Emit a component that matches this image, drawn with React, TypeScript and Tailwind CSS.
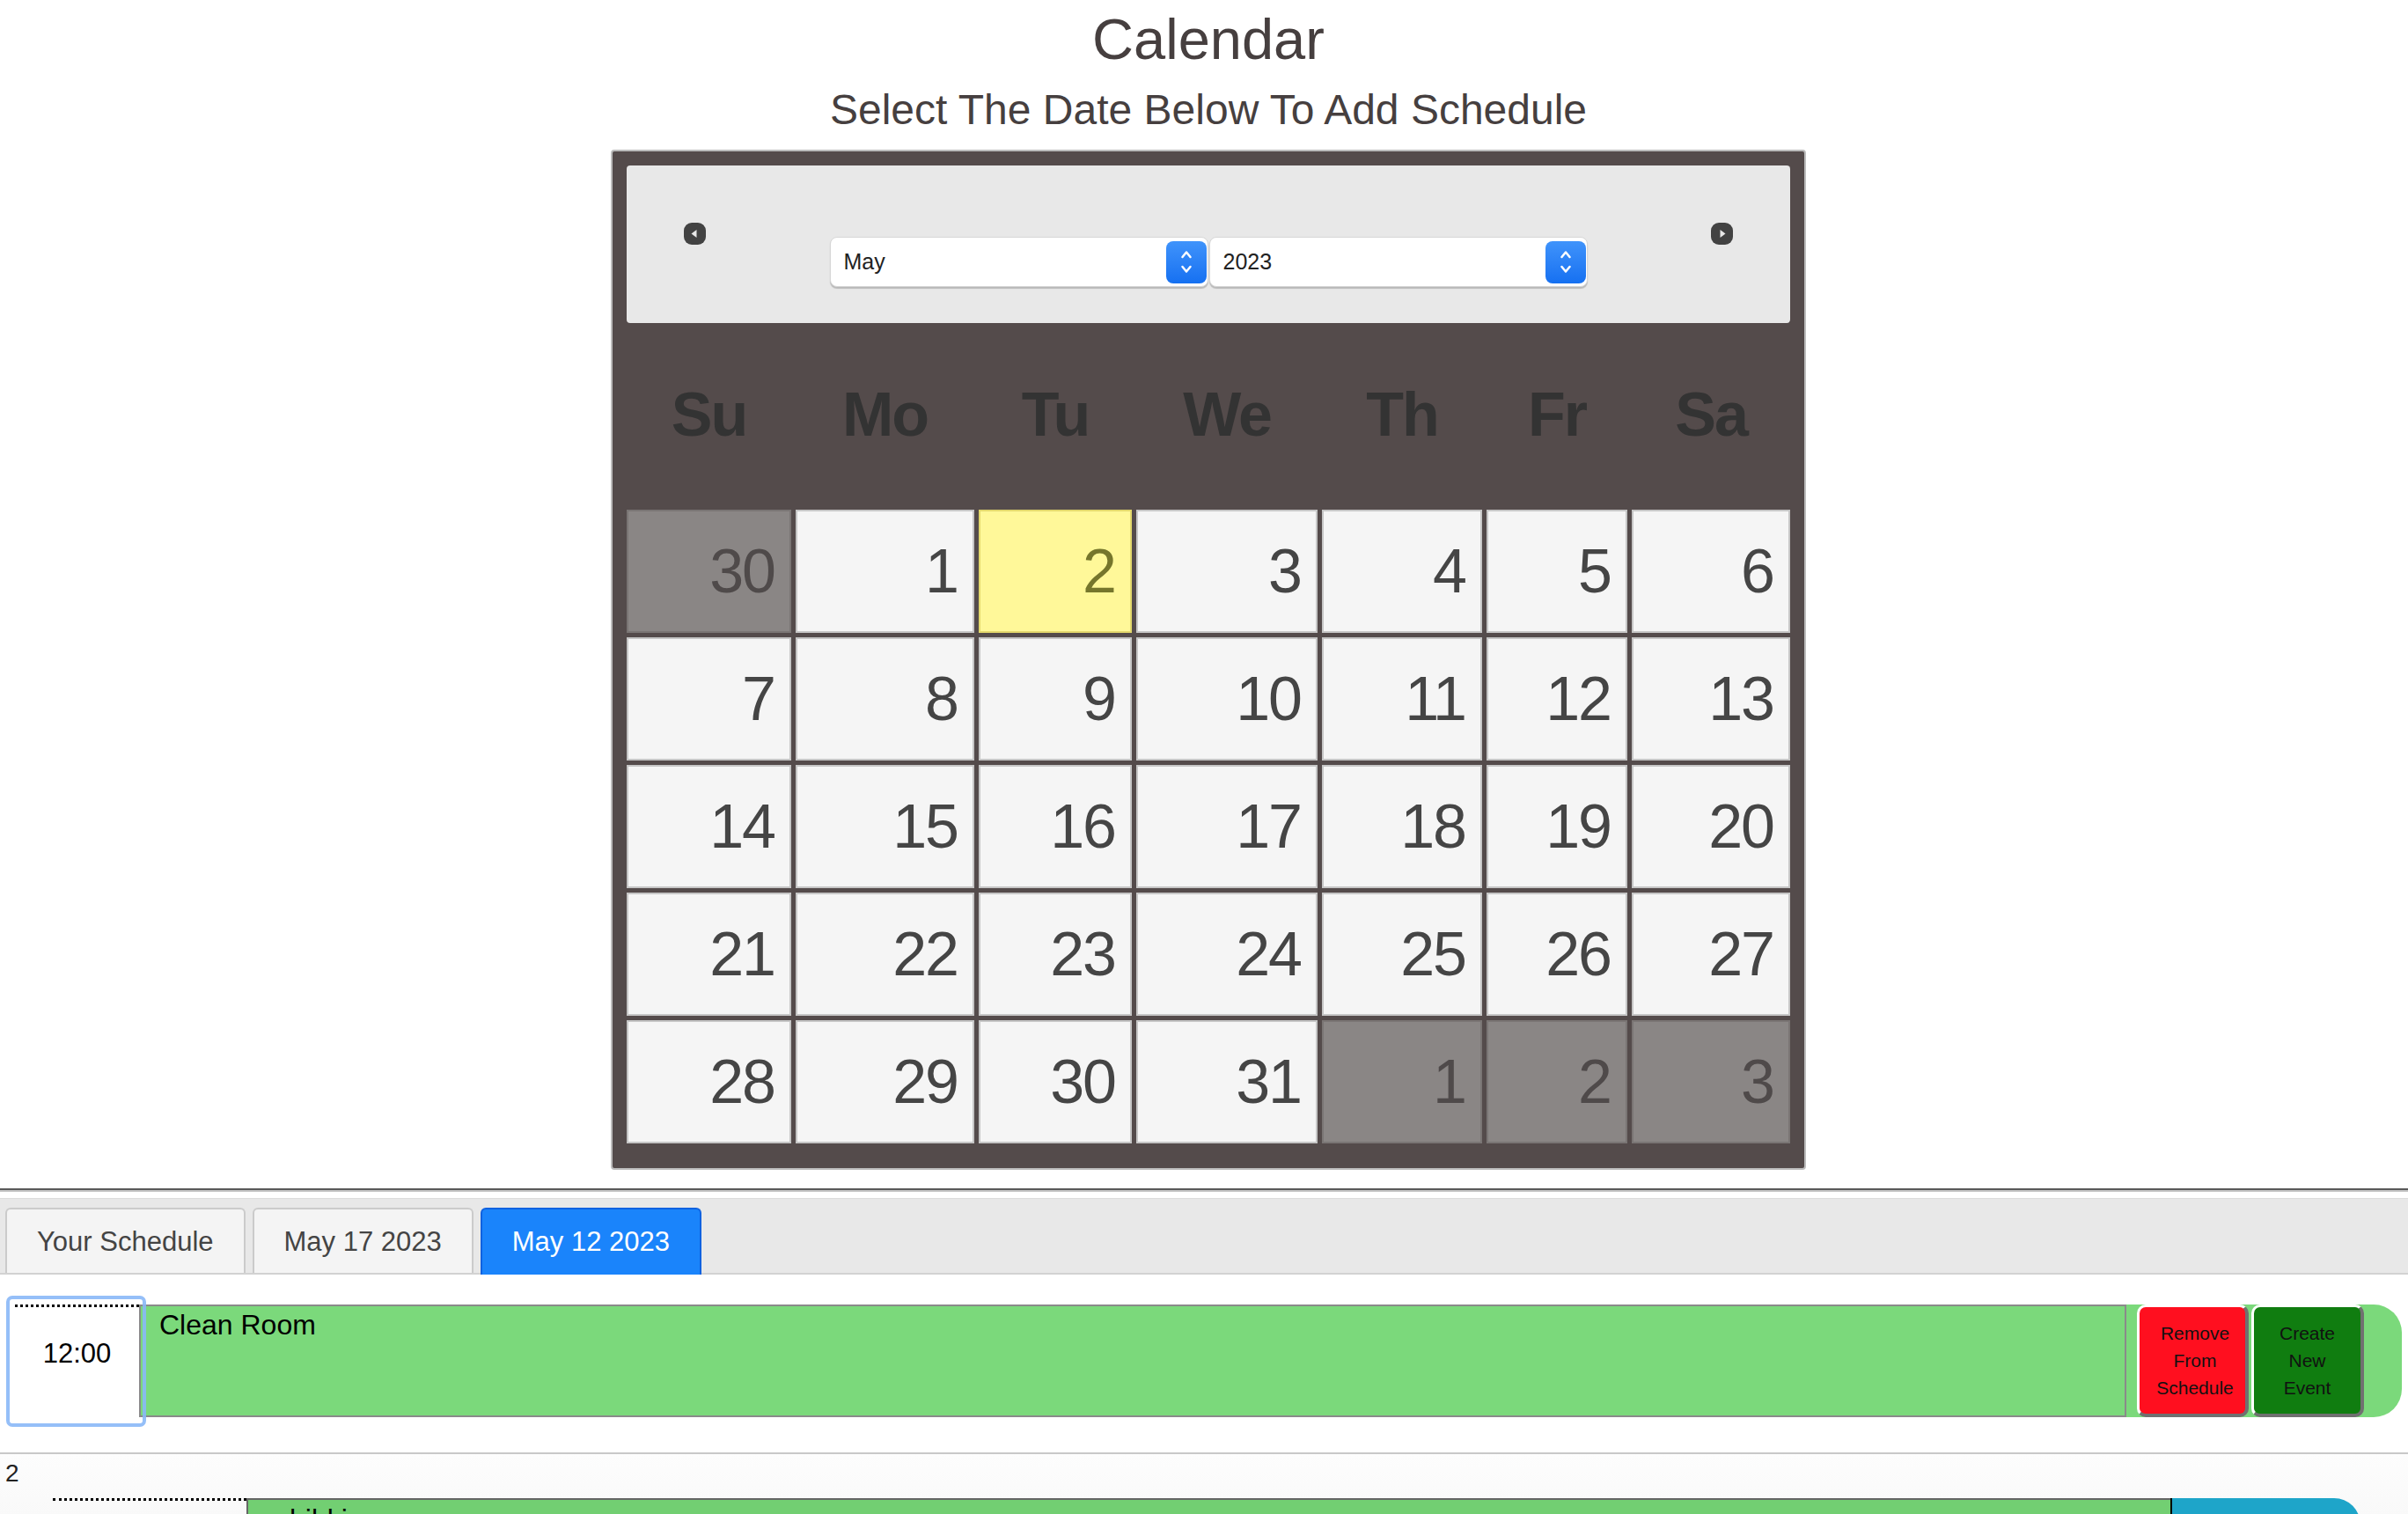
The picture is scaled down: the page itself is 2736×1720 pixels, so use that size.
import React from "react";

type Day = { n: number; other?: boolean; today?: boolean };

const weekDays = ["Su", "Mo", "Tu", "We", "Th", "Fr", "Sa"];

const weeks: Day[][] = [
  [{ n: 30, other: true }, { n: 1 }, { n: 2, today: true }, { n: 3 }, { n: 4 }, { n: 5 }, { n: 6 }],
  [{ n: 7 }, { n: 8 }, { n: 9 }, { n: 10 }, { n: 11 }, { n: 12 }, { n: 13 }],
  [{ n: 14 }, { n: 15 }, { n: 16 }, { n: 17 }, { n: 18 }, { n: 19 }, { n: 20 }],
  [{ n: 21 }, { n: 22 }, { n: 23 }, { n: 24 }, { n: 25 }, { n: 26 }, { n: 27 }],
  [{ n: 28 }, { n: 29 }, { n: 30 }, { n: 31 }, { n: 1, other: true }, { n: 2, other: true }, { n: 3, other: true }],
];

const cols = "grid grid-cols-[187px_203px_174px_206px_182px_160px_180px] gap-x-[5px]";

const NavArrow = ({ dir }: { dir: "left" | "right" }) => (
  <svg width="25" height="25" viewBox="0 0 25 25">
    <rect x="0" y="0" width="25" height="25" rx="9" fill="#424242" />
    {dir === "left" ? (
      <polygon points="8.5,12.5 14.5,8 14.5,17" fill="#e8e8e8" />
    ) : (
      <polygon points="16.5,12.5 10.5,8 10.5,17" fill="#e8e8e8" />
    )}
  </svg>
);

const SelectBox = ({ value }: { value: string }) => (
  <div className="w-[430px] h-[57px] bg-white rounded-[8px] border border-[#d6d6d6] shadow-[0_2px_1px_rgba(0,0,0,0.2)] flex items-center justify-between pl-[15px] pr-[1px]">
    <span className="text-[25px] leading-none text-[#222]">{value}</span>
    <div className="w-[46px] h-[48px] rounded-[8px] bg-gradient-to-b from-[#3f93fb] to-[#1570f1] flex items-center justify-center">
      <svg width="46" height="48" viewBox="0 0 46 48" fill="none" stroke="white" strokeWidth="2.5" strokeLinecap="round" strokeLinejoin="round">
        <polyline points="18.5,18 23,12.5 27.5,18" />
        <polyline points="18.5,29 23,34.5 27.5,29" />
      </svg>
    </div>
  </div>
);

const DayCell = ({ day }: { day: Day }) => {
  let tone = "bg-[#f5f5f5] border-[#c6c6c6] text-[#454545]";
  if (day.other) tone = "bg-[#8a8685] border-[#7a7574] text-[#4f4a4a]";
  if (day.today) tone = "bg-[#fff899] border-[#e3d86c] text-[#76762c]";
  return (
    <div className={`h-[140px] border-2 flex items-center justify-end pr-[17px] text-[70px] leading-none tracking-[-2px] ${tone}`}>
      {day.n}
    </div>
  );
};

const tabs = [
  { label: "Your Schedule", active: false },
  { label: "May 17 2023", active: false },
  { label: "May 12 2023", active: true },
];

export default function App() {
  return (
    <div className="min-h-screen bg-white font-['Liberation_Sans',Arial,sans-serif] overflow-hidden">
      <div className="pl-[10px]">
        <h1 className="mt-[12px] text-center text-[65px] leading-none text-[#463f3f]">Calendar</h1>
        <h2 className="mt-[24px] text-center text-[48px] leading-none text-[#463f3f]">
          Select The Date Below To Add Schedule
        </h2>

        <div className="mt-[21px] mx-auto w-[1358px] border-2 border-[#bcbcbc] rounded-[4px] bg-[#544b4b] px-[16px] pt-[16px] pb-[28px]">
          <div className="h-[179px] rounded-[4px] bg-[#e8e8e8] flex items-start justify-between px-[65px] pt-[65px]">
            <NavArrow dir="left" />
            <div className="mt-[16px] flex gap-[1px]">
              <SelectBox value="May" />
              <SelectBox value="2023" />
            </div>
            <NavArrow dir="right" />
          </div>

          <div className={`${cols} h-[207px] items-center`}>
            {weekDays.map((d) => (
              <div key={d} className="text-center text-[70px] font-bold leading-none tracking-[-2px] text-[#333]">
                {d}
              </div>
            ))}
          </div>

          <div className={`${cols} mt-[5px] gap-y-[5px]`}>
            {weeks.map((week, wi) => week.map((day, di) => <DayCell key={`${wi}-${di}`} day={day} />))}
          </div>
        </div>
      </div>

      <div className="mt-[21px] border-t-2 border-b-2 border-t-[#595959] border-b-[#c4c4c4]" />

      <div className="mt-[7px] h-[87px] bg-[#e8e8e8] border-t border-t-[#dcdcdc] border-b-2 border-b-[#d2d2d2] flex items-end gap-[8px] px-[6px]">
        {tabs.map((t) =>
          t.active ? (
            <div
              key={t.label}
              className="h-[76px] -mb-[2px] px-[34px] rounded-t-[6px] border-2 border-b-0 border-[#0f62e0] bg-[#1a84fb] text-white text-[31px] leading-none flex items-center pb-[2px]"
            >
              {t.label}
            </div>
          ) : (
            <div
              key={t.label}
              className="h-[74px] px-[34px] rounded-t-[6px] border-2 border-b-0 border-[#cbcbcb] bg-[#f4f4f4] text-[#444] text-[31px] leading-none flex items-center"
            >
              {t.label}
            </div>
          )
        )}
      </div>

      <div className="pt-[34px] pb-[40px] border-b-2 border-[#c8c8c8]">
        <div className="flex pl-[17px] pr-[7px]">
          <div className="relative w-[141px] h-[128px] bg-white border-t-[3px] border-dotted border-black flex justify-center pt-[37px] text-[31px] leading-none text-black">
            12:00
            <div className="absolute left-[-10px] top-[-13px] w-[159px] h-[149px] border-4 border-[#8ab8f7]/90 rounded-[7px] z-10 pointer-events-none" />
          </div>
          <div className="flex-1 h-[128px] flex bg-[#7bd97b] rounded-r-[32px] pr-[43px]">
            <div className="flex-1 border-2 border-[#8a8a8a] bg-[#7bd97b] pl-[21px] pt-[5px] text-[32px] leading-none text-black">
              Clean Room
            </div>
            <button className="ml-[12px] w-[127px] h-full rounded-[10px] border-t-[3px] border-l-[3px] border-r-[4px] border-b-[4px] border-t-white border-l-white border-r-[#707070] border-b-[#707070] bg-[#ff0f1f] text-[21px] leading-[31px] text-[#111] text-center flex items-center justify-center pl-[6px]">
              Remove From Schedule
            </button>
            <button className="ml-[3px] w-[128px] h-full rounded-[10px] border-t-[3px] border-l-[3px] border-r-[4px] border-b-[4px] border-t-white border-l-white border-r-[#707070] border-b-[#707070] bg-[#107d10] text-[21px] leading-[31px] text-[#111] text-center flex items-center justify-center px-[14px]">
              Create New Event
            </button>
          </div>
        </div>
      </div>

      <div className="bg-gradient-to-b from-[#fdfdfd] to-[#ececec] pt-[8px] h-[300px]">
        <div className="pl-[6px] text-[28px] leading-none text-[#222]">2</div>
        <div className="mt-[14px] flex pl-[60px]">
          <div className="w-[220px] h-[128px] border-t-[3px] border-dotted border-black" />
          <div className="w-[2186px] h-[128px] border-t-2 border-l-2 border-[#666] bg-[#72cf72] pl-[31px] pt-[6px] text-[32px] leading-none text-black">
            shibki
          </div>
          <div className="w-[216px] h-[128px] rounded-tr-[30px] border-l-2 border-black bg-[#1ea5c9]" />
        </div>
      </div>
    </div>
  );
}
